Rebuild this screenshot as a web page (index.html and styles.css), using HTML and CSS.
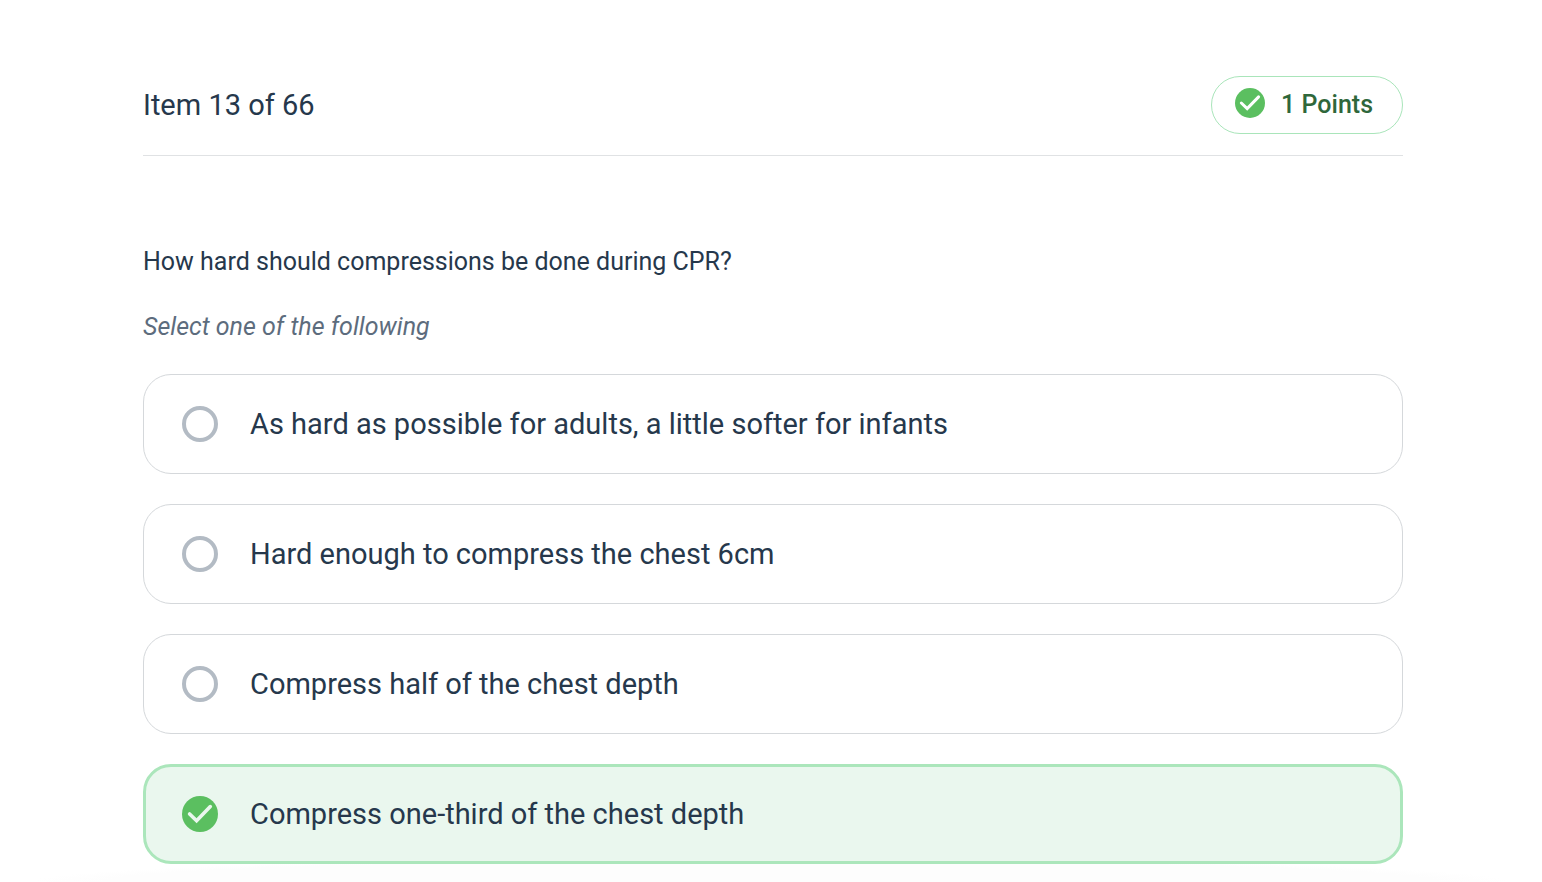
FILE: index.html
```
<!doctype html>
<html lang="en">
  <head>
    <meta charset="UTF-8" />
    <meta name="viewport" content="width=device-width, initial-scale=1.0"/>
    <title>Item 13 of 66</title>
    <link rel="stylesheet" href="styles.css">
  </head>
  <body>
    <main class="quiz">
      <header class="quiz-header">
        <h1>Item 13 of 66</h1>
        <div class="points">
          <svg class="points-icon" viewBox="0 0 36 36" aria-hidden="true">
            <circle cx="18" cy="18" r="18" fill="#5bbf60"/>
            <path d="M7.6 18l7 6.7L28.3 10.6" fill="none" stroke="#fff" stroke-width="3.6" stroke-linecap="round"/>
          </svg>
          <span>1 Points</span>
        </div>
      </header>

      <form>
        <fieldset class="question">
          <legend>How hard should compressions be done during CPR?</legend>
          <p class="hint">Select one of the following</p>
          <div class="options">
            <label class="option">
              <input type="radio" name="answer" value="1" />
              <span>As hard as possible for adults, a little softer for infants</span>
            </label>
            <label class="option">
              <input type="radio" name="answer" value="2" />
              <span>Hard enough to compress the chest 6cm</span>
            </label>
            <label class="option">
              <input type="radio" name="answer" value="3" />
              <span>Compress half of the chest depth</span>
            </label>
            <label class="option correct">
              <input type="radio" name="answer" value="4" checked />
              <span>Compress one-third of the chest depth</span>
            </label>
          </div>
        </fieldset>
      </form>
    </main>
  </body>
</html>
```
FILE: styles.css
```
* {
  box-sizing: border-box;
}
body {
  margin: 0;
  background: #fff;
  color: #26384c;
  font-family: Roboto, "Liberation Sans", sans-serif;
}
.quiz {
  padding: 76px 139px 18px 143px;
  background: radial-gradient(ellipse 48% 24px at 50% 100%, #fdfdfd 90%, #fff) no-repeat;
}
.quiz-header {
  display: flex;
  align-items: center;
  justify-content: space-between;
  padding-bottom: 21px;
  border-bottom: 1px solid #e0e2e4;
}
.quiz-header h1 {
  margin: 0;
  font-size: 29px;
  font-weight: 400;
  line-height: 40px;
}
.points {
  display: flex;
  align-items: center;
  gap: 16px;
  height: 58px;
  padding: 0 29px 2px 23px;
  border: 1px solid #a9e5ba;
  border-radius: 29px;
  color: #2f673b;
  font-size: 25px;
  font-weight: 500;
}
.points-icon {
  width: 30px;
  height: 30px;
  margin-bottom: 2px;
}
.question {
  min-width: 0;
  margin: 0;
  padding: 88px 0 0;
  border: 0;
}
.question legend {
  float: left;
  width: 100%;
  padding: 0;
  font-size: 25px;
  line-height: 36px;
}
.hint {
  clear: both;
  margin: 0;
  padding: 29px 0;
  color: #5d6c7d;
  font-size: 25px;
  font-style: italic;
  line-height: 36px;
}
.options {
  display: grid;
  gap: 30px;
}
.option {
  display: flex;
  align-items: center;
  gap: 32px;
  min-height: 100px;
  padding: 16px 38px;
  border: 1px solid #d5d8db;
  border-radius: 28px;
  background: #fff;
  font-size: 29px;
  line-height: 40px;
  cursor: pointer;
}
.option input {
  flex: none;
  appearance: none;
  width: 36px;
  height: 36px;
  margin: 0;
  border: 4px solid #b3bbc4;
  border-radius: 50%;
}
.option input:checked {
  border: 0;
  background: #5bbf60 url("data:image/svg+xml,%3Csvg xmlns='http://www.w3.org/2000/svg' viewBox='0 0 36 36'%3E%3Cpath d='M7.6 18l7 6.7L28.3 10.6' fill='none' stroke='%23eaf7ee' stroke-width='3.6' stroke-linecap='round'/%3E%3C/svg%3E") center / 36px;
}
.correct {
  padding: 14px 36px;
  border: 3px solid #abe6bb;
  background: #eaf7ee;
}
```
